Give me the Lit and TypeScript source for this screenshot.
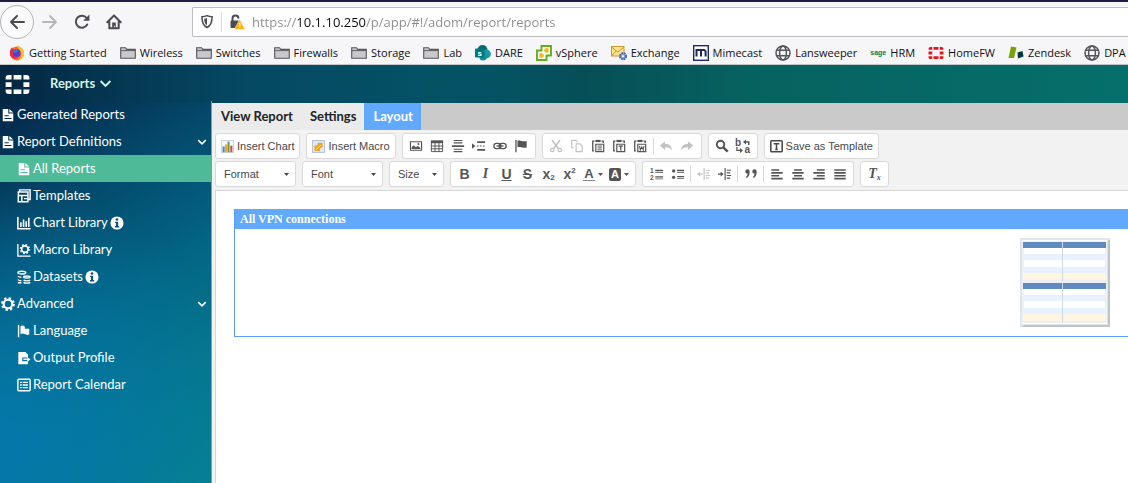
import { LitElement, html, svg, css } from "lit";
import { customElement } from "lit/decorators.js";
import { classMap } from "lit/directives/class-map.js";

const icon = (body: unknown, w = 16, h = 16, box = "0 0 16 16") =>
  html`<svg class="icon" width=${w} height=${h} viewBox=${box} fill="currentColor" aria-hidden="true">${body}</svg>`;

/* Browser chrome */
const back = icon(svg`<path d="M15 8H2M8 2L2 8l6 6" fill="none" stroke="currentColor" stroke-width="2" stroke-linecap="round" stroke-linejoin="round"/>`);
const forward = icon(svg`<path d="M1 8h13M8 2l6 6-6 6" fill="none" stroke="currentColor" stroke-width="2" stroke-linecap="round" stroke-linejoin="round"/>`);
const reload = icon(svg`<path d="M13.2 10.5A6 6 0 1 1 12.6 4" fill="none" stroke="currentColor" stroke-width="2" stroke-linecap="round"/><path d="M15.4 .6v6.2H9.2z"/>`);
const home = icon(svg`<path d="M1.3 8.2L8 1.5l6.7 6.7M3.3 7.5v6.8h9.4V7.5" fill="none" stroke="currentColor" stroke-width="2" stroke-linecap="round" stroke-linejoin="round"/><path d="M6.2 14V8.6h3.6V14H8.8v-2.2h-.9V14z"/>`);
const shield = icon(svg`<path d="M8 1.3c2 1 4 1.2 5.8 1.2 0 6-.8 10-5.8 12.300C3 12.500 2.200 8.500 2.200 2.500 4 2.500 6 2.300 8 1.300z" fill="none" stroke="currentColor" stroke-width="1.700"/><path d="M8 4c-1 .5-2 .7-3.200.8.1 3.700.8 6 3.200 7.600z"/>`, 14, 15);
const lock = icon(svg`<path d="M3.500 7V4.500a3 3 0 0 1 6 0" fill="none" stroke="currentColor" stroke-width="2"/><rect x="1.500" y="6.500" width="9.500" height="7.500" rx="1"/><path d="M10.800 5.200L16 15.500H5.200z" fill="#ffae14" stroke="#fff" stroke-width=".5"/><path d="M10.200 8.800h1.200v3.200h-1.200zM10.200 12.800h1.200v1.200h-1.200z" fill="#fff"/>`);
const folder = icon(svg`<path d="M.7 13V2.700h4.800l1.200 1.700h8.600V13.300H.7z" fill="#c9c9cc" stroke="#56565a" stroke-width="1.100"/><path d="M1 5.600h14" stroke="#56565a" stroke-width=".9"/>`);
const globe = icon(svg`<g fill="none" stroke="#55555a" stroke-width="1.500"><circle cx="8" cy="8" r="7"/><ellipse cx="8" cy="8" rx="3.400" ry="7"/><path d="M1.700 5.300h12.600M1.700 10.700h12.600"/></g>`);
const firefox = icon(svg`<circle cx="8" cy="8.400" r="7" fill="#ff6a1f"/><path d="M8.500.6C13 2 15.600 5.500 15 9.500c-.5 3.200-3 5.400-5.800 5.800 3-2.500 4-5.600 2.400-8.800C10.800 4.800 8.700 3.500 8.500.6z" fill="#ffc52b"/><circle cx="7.600" cy="8" r="3.900" fill="#5a3bd0"/><path d="M4 6.500C5.300 4 8 3.500 10 4.700L8.500 6.800 5.600 8z" fill="#2b7fe0"/><path d="M1 6.200C1.500 4 2.500 2.800 3.200 2.200c.2 1.200.8 1.900 1.800 2.300L3.700 8.400c.4 3 3 4.300 5.500 3.600-1.200 2.300-6 2.300-7.600-.8A9 9 0 0 1 1 6.200z" fill="#f0264c"/>`);
const sharepoint = icon(svg`<circle cx="7.500" cy="5" r="5" fill="#036c70"/><circle cx="11.500" cy="9" r="4.400" fill="#1a9ba1"/><circle cx="8" cy="12" r="3.600" fill="#0f8f96"/><rect y="3.500" width="9.500" height="9" rx="1" fill="#03787c"/><text x="4.700" y="11" text-anchor="middle" font-family="Liberation Sans, sans-serif" font-weight="700" font-size="8" fill="#fff">s</text>`);
const vsphere = icon(svg`<path d="M5.500 1H15v9.500h-4.500V15H1V5.500h4.500z" fill="#fff" stroke="#5cb01c" stroke-width="1.900"/><path d="M5.500 8.500v2h2M8.500 5.500h2v2" fill="none" stroke="#5cb01c" stroke-width="1.500"/><rect x="8.600" y="3.300" width="4" height="4" fill="#fbb216"/><rect x="3.300" y="8.600" width="4" height="4" fill="#fbb216"/>`);
const exchange = icon(svg`<rect x=".5" y="1.500" width="12.500" height="9.500" fill="#fbe38a" stroke="#c79a34"/><path d="M.5 2l6.300 5L13 2M.5 11l4.500-5" fill="none" stroke="#c79a34"/><circle cx="12" cy="11.200" r="2.800" fill="#86a5dd"/><circle cx="12" cy="11.200" r="3.100" fill="none" stroke="#3e61ae" stroke-width="1.800" stroke-dasharray="1.800 .7"/><circle cx="12" cy="11.200" r="1" fill="#fff"/>`);
const mimecast = icon(svg`<rect x=".7" y=".7" width="14.600" height="14.600" fill="#fff" stroke="#1d2b5a" stroke-width="1.400"/><path d="M3.500 11.500V5h7.800l1.300 1.300v5.200M8 5v6.500" fill="none" stroke="#1d2b5a" stroke-width="2"/>`);
const sage = html`<span class="sage" aria-hidden="true">sage</span>`;
const grid = (w: number, h: number) =>
  icon(svg`<path d="M2.500 0H5v3.700H0V2.500Q0 0 2.500 0zM6.700 0h6.600v3.700H6.700zM15 0h2.500Q20 0 20 2.500v1.200H15zM0 6h5v4H0zM15 6h5v4H15zM0 12.300h5V16H2.500Q0 16 0 13.500zM6.700 12.300h6.600V16H6.700zM15 12.300h5v1.200Q20 16 17.500 16H15z"/>`, w, h, "0 0 20 16");
const zendesk = icon(svg`<path d="M3 1.500l5.500 1L6 13H.5z" fill="#78a300"/><path d="M9.500 7.500l5-1.500 1 5.500-5.500 2z" fill="#03363d"/>`);

/* Sidebar */
const report = icon(svg`<path fill-rule="evenodd" d="M2 1h6.300v5.200H14V15H2zM4 8.200v1.200h5V8.200zm0 3.200v1.200h8v-1.200z"/><path d="M9.500 1L14 5H9.500z"/>`, 14, 14);
const template = icon(svg`<path d="M3 3V1h12v11h-2M1.500 3.500h11v11h-11zM1.500 7.500h11M5.500 7.500v7M8 11h4" fill="none" stroke="currentColor" stroke-width="1.700"/>`, 14, 14);
const chart = icon(svg`<path d="M1 1v13.500h14.500M4.500 12.500V7M7.500 12.500V4M10.500 12.500V6M13.500 12.500V2" fill="none" stroke="currentColor" stroke-width="1.800"/>`, 14, 14);
const gear = svg`<circle cx="8" cy="8" r="4.900" fill="none" stroke="currentColor" stroke-width="2.400"/><circle cx="8" cy="8" r="6.800" fill="none" stroke="currentColor" stroke-width="2.200" stroke-dasharray="2.670 2.670"/>`;
const macro = icon(svg`<path d="M1 1v14h14.500" fill="none" stroke="currentColor" stroke-width="1.500"/><g transform="translate(3 1) scale(.75)">${gear}</g>`, 14, 14);
const dataset = icon(svg`<g fill="none" stroke="currentColor" stroke-width="1.600"><ellipse cx="5.500" cy="3" rx="4.500" ry="1.500"/><path d="M1 7c1 1 2.500 1.300 4 1.300M1 11c1 1 2.500 1.300 4 1.300M1 14.600h4M7.500 8c0 1.500 7.500 1.500 7.500 0s-7.500-1.500-7.500 0zM7.500 11.300c1 1.500 6.500 1.500 7.500 0M7.500 14c1 1.400 6.500 1.400 7.500 0"/></g>`, 14, 14);
const flagSide = icon(svg`<path d="M1 1h1.600v14H1zM4 2.500c2-1.200 3.500-.8 5 .5v2.500h5V12c-2 .8-3.500.5-5-.5s-3-1-5-.2z"/>`, 14, 14);
const output = icon(svg`<path d="M1.500 1h8l3 3v3.300H6v4.400h6.500V15h-11z"/><path d="M7.300 8.700h4.500V6.800l3.700 2.800-3.700 2.700v-1.900H7.300z"/>`, 14, 14);
const calendar = icon(svg`<rect x="1" y="1.500" width="14" height="13" rx="1" fill="none" stroke="currentColor" stroke-width="1.600"/><path d="M3.500 5h2M6.500 5h6M3.500 8h2M6.500 8h6M3.500 11h2M6.500 11h6" stroke="currentColor" stroke-width="1.500"/>`, 14, 14);
const info = icon(svg`<circle cx="8" cy="8" r="7.500"/><g fill="#0a5277"><circle cx="8" cy="4" r="1.500"/><path d="M5.800 6.500h3.500v5h1.200V13H5.700v-1.500h1.200V8H5.800z"/></g>`, 14, 14);
const chevron = (w: number) =>
  icon(svg`<path d="M2 5l6 6 6-6" fill="none" stroke="currentColor" stroke-width="2.400"/>`, w, w);

/* Editor toolbar */
const tiChart = icon(svg`<path d="M.5.5h15v15H.5z" fill="#f4f7fb" stroke="#b9c6d8"/><path d="M2 8h2.500v7H2z" fill="#4d86c6"/><path d="M5 5.500h2.500V15H5z" fill="#f0a22e"/><path d="M8 2h2.500v13H8z" fill="#5e9c3e"/><path d="M11.500 7H14v8h-2.500z" fill="#d6493c"/>`, 13, 13);
const tiMacro = icon(svg`<path d="M.5.5h15v15H.5z" fill="#dfe9f6" stroke="#9fb3d0"/><path d="M3 12V7l4-1V3.500h6V9l-3 1v3.500H3z" fill="#eda51f"/><path d="M5 12l6-6" stroke="#fff3cf"/>`, 13, 13);
const image = icon(svg`<path fill-rule="evenodd" d="M1 2.500h14v11H1zM2.300 3.800v8.400h11.400V3.800z"/><path d="M3 11.500V9.500L5.500 7l2.200 2.300L10 8l3 2v1.500z"/><circle cx="10.800" cy="5.800" r="1.100"/>`, 14, 14);
const table = icon(svg`<path d="M1 1.500h14v3.300H1z"/><path d="M1.600 4v10.400h12.800V4M1 8h14M1 11.200h14M5.700 4v10.500M10.200 4v10.500" fill="none" stroke="currentColor" stroke-width="1.100"/>`, 14, 14);
const rule = icon(svg`<path d="M3 1h10v1.200H3zM3 3.800h10V5H3zM1 7.200h14v2H1zM3 11.200h10v1.200H3zM3 13.800h10V15H3z"/>`, 14, 14);
const pageBreak = icon(svg`<path d="M0 5l4 3-4 3zM6 2.500h9v2H6zM5.500 7.300h2v1.400h-2zM9 7.300h2v1.400H9zM12.500 7.300h2v1.400h-2zM6 11.500h9v2H6z"/>`, 14, 14);
const link = icon(svg`<g fill="none" stroke="currentColor" stroke-width="1.500"><rect x="1" y="5" width="8" height="6" rx="3"/><rect x="7" y="5" width="8" height="6" rx="3"/><path d="M4 8h8"/></g>`, 14, 14);
const flag = icon(svg`<path d="M1.500 1H3v14H1.500zM4 2c3-1 5 1.500 10.500.3v7.400C9 11 7 8.500 4 9.500z"/>`, 14, 14);
const cut = icon(svg`<path d="M3.500 1.500l7.500 10M12.500 1.500L5 11.500" fill="none" stroke="currentColor" stroke-width="1.800"/><circle cx="3.700" cy="12.500" r="1.900" fill="none" stroke="currentColor" stroke-width="1.400"/><circle cx="12.300" cy="12.500" r="1.900" fill="none" stroke="currentColor" stroke-width="1.400"/>`, 14, 14);
const copy = icon(svg`<path d="M4.500 10H2V1.500h5l2 2M7 5.500h4.500L14 8v6.500H7z" fill="none" stroke="currentColor" stroke-width="1.300"/>`, 14, 14);
const pasteBase = svg`<path d="M3.500 13.500H2v-11h2M12 2.500h2v2" fill="none" stroke="currentColor" stroke-width="1.500"/><path d="M5 1h6v2.500H5z"/><path d="M5.500 6h9v8.500h-9z" fill="none" stroke="currentColor" stroke-width="1.400"/>`;
const paste = icon(svg`${pasteBase}<path d="M7.500 8h5M7.500 10.200h5M7.500 12.400h5" stroke="currentColor" stroke-width="1.100"/>`, 14, 14);
const pasteText = icon(svg`${pasteBase}<path d="M7.500 8.200h5M10 8v5" stroke="currentColor" stroke-width="1.500"/>`, 14, 14);
const pasteWord = icon(svg`${pasteBase}<path d="M7.400 8l1 4.500L10 9l1.600 3.500 1-4.500" fill="none" stroke="currentColor" stroke-width="1.200"/>`, 14, 14);
const undoPath = svg`<path d="M1 7.500L7 2.500v3.300c4.500 0 7.500 2.200 8 7.200-1.800-2.700-4-3.600-8-3.500v3.300z"/>`;
const undo = icon(undoPath, 14, 14);
const redo = icon(svg`<g transform="matrix(-1 0 0 1 16 0)">${undoPath}</g>`, 14, 14);
const find = icon(svg`<circle cx="6.300" cy="6.300" r="4.300" fill="none" stroke="currentColor" stroke-width="2.200"/><path d="M9.500 9.500l5 5" stroke="currentColor" stroke-width="2.800"/>`, 14, 14);
const replace = icon(svg`<g font-family="Liberation Sans, sans-serif" font-weight="700" font-size="10"><text x="0" y="8">b</text><text x="9.500" y="15">a</text></g><path d="M8 4l3-2.500v1.700h3.500V7H13V4.800h-2v1.700zM8 12.500L5 10v1.700H2.500V9H1.300v4H5v2z"/>`, 16, 16);
const tiTemplate = icon(svg`<rect x="1" y="1" width="14" height="13.500" rx="1" fill="none" stroke="currentColor" stroke-width="1.900"/><path d="M4.500 4.500h7M8 4.500v7.500M6.500 11.800h3" fill="none" stroke="currentColor" stroke-width="1.900"/>`, 13, 13);
const numbered = icon(svg`<g font-family="Liberation Sans, sans-serif" font-weight="700" font-size="7.500"><text x="0" y="7">1</text><text x="0" y="15">2</text></g><path d="M6 3h9v1.500H6zM6 5.500h9v1H6zM6 10.500h9V12H6zM6 13h9v1H6z"/>`, 14, 14);
const bulleted = icon(svg`<circle cx="3" cy="4.500" r="1.900"/><circle cx="3" cy="11.800" r="1.900"/><path d="M7 3h8v1.500H7zM7 5.500h8v1H7zM7 10.300h8v1.500H7zM7 12.800h8v1H7z"/>`, 14, 14);
const outdent = icon(svg`<path d="M7.500 1h1.300v14H7.500zM10 3h5v1.300h-5zM10 6h4v1.300h-4zM10 9h5v1.300h-5zM10 12h4v1.300h-4zM0 8l3.500-2.700v2h3v1.500h-3v2z"/>`, 14, 14);
const indent = icon(svg`<path d="M7.500 1h1.300v14H7.500zM10 3h5v1.300h-5zM10 6h4v1.300h-4zM10 9h5v1.300h-5zM10 12h4v1.300h-4zM6.500 8L3 5.300v2H0v1.500h3v2z"/>`, 14, 14);
const quote = icon(svg`<path d="M1.500 5a2.500 2.500 0 1 1 5 0c0 3.500-1 6-3.500 7.500l-.8-1C3.500 10.500 4 9 4 7.500 2.500 7.500 1.500 6.500 1.500 5zM9.500 5a2.500 2.500 0 1 1 5 0c0 3.500-1 6-3.500 7.500l-.8-1C11.500 10.500 12 9 12 7.500 10.500 7.500 9.500 6.500 9.500 5z"/>`, 14, 14);
const align = (a: number, b: number) =>
  icon(svg`<path d="M${a} 2.500h9v1.800h-9zM${b} 5.800h13v1.800H${b}zM${a} 9.100h9v1.800h-9zM${b} 12.400h13v1.800H${b}z"/>`, 14, 14);
const justify = icon(svg`<path d="M1.500 2.500h13v1.800h-13zM1.500 5.800h13v1.800h-13zM1.500 9.100h13v1.800h-13zM1.500 12.400h13v1.800h-13z"/>`, 14, 14);
const caret = icon(svg`<path d="M0 0h5L2.500 3z"/>`, 5, 3, "0 0 5 3");

const bookmarks: [unknown, string][] = [
  [firefox, "Getting Started"], [folder, "Wireless"], [folder, "Switches"], [folder, "Firewalls"],
  [folder, "Storage"], [folder, "Lab"], [sharepoint, "DARE"], [vsphere, "vSphere"],
  [exchange, "Exchange"], [mimecast, "Mimecast"], [globe, "Lansweeper"], [sage, "HRM"],
  [html`<span class="red">${grid(16, 12)}</span>`, "HomeFW"], [zendesk, "Zendesk"], [globe, "DPA"],
];

interface NavItem { label: string; icon: unknown; sub?: boolean; active?: boolean; info?: boolean; open?: boolean }
const nav: NavItem[] = [
  { label: "Generated Reports", icon: report },
  { label: "Report Definitions", icon: report, open: true },
  { label: "All Reports", icon: report, sub: true, active: true },
  { label: "Templates", icon: template, sub: true },
  { label: "Chart Library", icon: chart, sub: true, info: true },
  { label: "Macro Library", icon: macro, sub: true },
  { label: "Datasets", icon: dataset, sub: true, info: true },
  { label: "Advanced", icon: icon(gear, 14, 14), open: true },
  { label: "Language", icon: flagSide, sub: true },
  { label: "Output Profile", icon: output, sub: true },
  { label: "Report Calendar", icon: calendar, sub: true },
];

@customElement("browser-bar")
class BrowserBar extends LitElement {
  static styles = css`
    :host { display: block; background: #f6f6f8; border-top: 2px solid #1d1c42; border-bottom: 1px solid #c4c6c9; font-family: "Open Sans", "Noto Sans", sans-serif; color: #101014; }
    .icon { display: block; flex: none; }
    .nav { display: flex; align-items: center; height: 39px; }
    button { display: flex; align-items: center; justify-content: center; width: 32px; height: 32px; padding: 0; border: 0; background: none; color: #4a4a4f; }
    .back { width: 34px; height: 34px; border: 1px solid #b4b4b6; border-radius: 50%; background: #fbfbfc; }
    .off { color: #b6b6b9; }
    .url { display: flex; flex: 1; align-items: center; gap: 7px; height: 28px; margin-left: 62px; padding-left: 7px; border: 1px solid #bdbdc0; border-right: 0; border-radius: 2px 0 0 2px; background: #fff; color: #4a4a4f; }
    .split { width: 1px; height: 20px; background: #dcdcde; }
    input { flex: 1; min-width: 0; height: 26px; padding: 0; border: 0; outline: 0; font: 13px "Open Sans", "Noto Sans", sans-serif; caret-color: #111; -webkit-text-fill-color: transparent; background: linear-gradient(90deg, #8b8b8f 45px, #0c0c0d 45px 114px, #8b8b8f 114px); -webkit-background-clip: text; background-clip: text; }
    .marks { display: flex; align-items: center; gap: 13px; height: 23px; padding-left: 9px; overflow: hidden; white-space: nowrap; }
    a { display: flex; flex: none; align-items: center; gap: 4px; font-size: 11px; line-height: 16px; color: inherit; text-decoration: none; }
    .red { color: #e8131b; }
    .sage { font: 700 7px/12px "Liberation Sans", sans-serif; color: #00804d; }
  `;
  render() {
    return html`
      <div class="nav">
        <button class="back" aria-label="Back">${back}</button>
        <button class="off" aria-label="Forward">${forward}</button>
        <button aria-label="Reload">${reload}</button>
        <button aria-label="Home">${home}</button>
        <div class="url">${shield}<span class="split"></span>${lock}
          <input aria-label="Address" .value=${"https://10.1.10.250/p/app/#!/adom/report/reports"} />
        </div>
      </div>
      <nav class="marks">${bookmarks.map(([i, t]) => html`<a href="#">${i}<span>${t}</span></a>`)}</nav>`;
  }
}

@customElement("side-nav")
class SideNav extends LitElement {
  static styles = css`
    :host { display: block; border-right: 1px solid #5cb09f; font: 13px/27px Lato, sans-serif; color: #fff; }
    .icon { display: block; flex: none; }
    a { display: flex; align-items: center; gap: 2px; height: 27px; padding: 0 4px 0 1px; color: inherit; text-decoration: none; white-space: nowrap; }
    .sub { padding-left: 17px; }
    .active { background: #4fba98; }
    .end { margin-left: auto; }
  `;
  render() {
    return html`<nav>${nav.map((n) => html`
      <a href="#" class=${classMap({ sub: !!n.sub, active: !!n.active })}>${n.icon}<span>${n.label}</span>
        ${n.info ? info : ""}${n.open ? html`<span class="end">${chevron(10)}</span>` : ""}</a>`)}</nav>`;
  }
}

@customElement("editor-toolbar")
class EditorToolbar extends LitElement {
  static styles = css`
    :host { display: flex; flex-direction: column; gap: 2px; padding: 3px; background: #f2f2f2; font: 11px "Liberation Sans", sans-serif; color: #484848; }
    .icon { display: block; flex: none; }
    .row { display: flex; gap: 6px; }
    .group { display: flex; flex: none; align-items: center; height: 24px; padding: 0 3px; border: 1px solid #d9d9d9; border-radius: 3px; background: #fff; }
    button { display: flex; flex: none; align-items: center; justify-content: center; width: 21px; height: 24px; padding: 0; border: 0; background: none; font: inherit; color: #555; }
    .off { color: #c2c2c2; }
    .labelled { gap: 3px; width: auto; padding: 0 2px; color: #484848; white-space: nowrap; }
    .sep { width: 1px; height: 16px; margin: 0 2px; background: #d6d6d6; }
    .pick { display: grid; align-items: center; padding: 0; }
    .pick select { grid-area: 1 / 1; height: 24px; padding: 0 8px; border: 0; outline: 0; background: none; appearance: none; font: inherit; color: inherit; }
    .pick .icon { grid-area: 1 / 1; justify-self: end; margin-right: 6px; pointer-events: none; }
    .wide { width: 79px; }
    .narrow { width: 53px; }
    .letter { font: 700 14px "Liberation Sans", sans-serif; }
    .italic { font: italic 700 14px "Liberation Serif", serif; }
    .under { text-decoration: underline; }
    .strike { text-decoration: line-through; }
    .script { font-size: 8px; }
    .low { align-self: flex-end; padding-bottom: 4px; }
    .high { align-self: flex-start; padding-top: 4px; }
    .colour { gap: 3px; width: 26px; }
    .ink { border-bottom: 1px solid #888; padding: 0 1px; font: 700 13px/13px "Liberation Sans", sans-serif; }
    .fill { padding: 0 2px; border-radius: 2px; background: #555; color: #fff; font: 700 11px/13px "Liberation Sans", sans-serif; }
  `;
  private b(label: string, body: unknown, cls = "") {
    return html`<button class=${cls} aria-label=${label} title=${label}>${body}</button>`;
  }
  private pick(label: string, size: string) {
    return html`<label class="group pick ${size}"><select aria-label=${label}><option>${label}</option></select>${caret}</label>`;
  }
  render() {
    const sep = html`<span class="sep"></span>`;
    return html`
      <div class="row">
        <div class="group"><button class="labelled">${tiChart}Insert Chart</button></div>
        <div class="group"><button class="labelled">${tiMacro}Insert Macro</button></div>
        <div class="group">${this.b("Image", image)}${this.b("Table", table)}${this.b("Horizontal Line", rule)}${this.b("Page Break", pageBreak)}${this.b("Link", link)}${this.b("Anchor", flag)}</div>
        <div class="group">${this.b("Cut", cut, "off")}${this.b("Copy", copy, "off")}${this.b("Paste", paste)}${this.b("Paste as text", pasteText)}${this.b("Paste from Word", pasteWord)}${sep}${this.b("Undo", undo, "off")}${this.b("Redo", redo, "off")}</div>
        <div class="group">${this.b("Find", find)}${this.b("Replace", replace)}</div>
        <div class="group"><button class="labelled">${tiTemplate}Save as Template</button></div>
      </div>
      <div class="row">
        ${this.pick("Format", "wide")}${this.pick("Font", "wide")}${this.pick("Size", "narrow")}
        <div class="group">
          ${this.b("Bold", "B", "letter")}${this.b("Italic", "I", "italic")}${this.b("Underline", "U", "letter under")}${this.b("Strikethrough", "S", "letter strike")}
          ${this.b("Subscript", html`x<span class="script low">2</span>`, "letter")}${this.b("Superscript", html`x<span class="script high">2</span>`, "letter")}
          ${this.b("Text Colour", html`<span class="ink">A</span>${caret}`, "colour")}${this.b("Background Colour", html`<span class="fill">A</span>${caret}`, "colour")}
        </div>
        <div class="group">${this.b("Numbered List", numbered)}${this.b("Bulleted List", bulleted)}${sep}${this.b("Outdent", outdent, "off")}${this.b("Indent", indent)}${sep}${this.b("Quote", quote)}${sep}${this.b("Left", align(1.5, 1.5))}${this.b("Centre", align(3.5, 1.5))}${this.b("Right", align(5.5, 1.5))}${this.b("Justify", justify)}</div>
        <div class="group">${this.b("Remove Format", html`T<span class="script low">x</span>`, "italic")}</div>
      </div>`;
  }
}

@customElement("report-canvas")
class ReportCanvas extends LitElement {
  static styles = css`
    :host { display: block; flex: 1; margin-left: 3px; padding: 18px 0 0 18px; border: solid #d6d6d6; border-width: 1px 0 0 1px; background: #fff; }
    .block { border: 1px solid #5d9bf5; border-width: 0 0 1px 1px; }
    h2 { margin: 0; padding-left: 5px; background: #60a9ff; color: #fff; font: 700 12px/20px "Liberation Serif", serif; }
    .body { display: flex; justify-content: flex-end; padding: 9px 18px 9px 0; }
    svg { display: block; }
  `;
  render() {
    const half = (y: number) => svg`
      <rect x="3" y=${y} width="83" height="39" fill="#fff" stroke="#dbe3ea"/>
      <rect x="3" y=${y} width="83" height="6" fill="#5f8bc0"/>
      <rect x="3" y=${y + 12} width="83" height="6" fill="#e8f1fe"/>
      <rect x="3" y=${y + 25} width="83" height="6" fill="#e8f1fe"/>
      <rect x="3" y=${y + 31} width="83" height="7" fill="#fef6e0"/>
      <rect x="42" y=${y} width="1" height="39" fill="#cfd9e4"/>`;
    return html`<section class="block"><h2>All VPN connections</h2>
      <div class="body"><svg width="90" height="89" viewBox="0 0 90 89" role="img" aria-label="Table chart">
        <rect width="90" height="89" fill="#dfe5ea"/><path d="M90 2v87H2l2-2h84V2z" fill="#bfc4c9"/>
        <rect x="2" y="2" width="85" height="84" fill="#fff"/>${half(4)}${half(45)}</svg></div></section>`;
  }
}

@customElement("app-root")
class AppRoot extends LitElement {
  static styles = css`
    :host { display: flex; flex-direction: column; min-height: 100vh; }
    .icon { display: block; flex: none; }
    .app { display: grid; flex: 1; grid-template: 36px 1fr / 212px 1fr; background: radial-gradient(circle at 0 380px, #0578ab 0, #0578ab00 260px), linear-gradient(150deg, #04284a 40px, #044a6c 150px, #036685 260px, #04768c 350px, #06828e 470px); }
    header { display: flex; grid-column: 1 / -1; align-items: center; gap: 20px; padding-left: 5px; margin-bottom: -2px; background: linear-gradient(90deg, #042743, #054963 22%, #045365 42%, #064f57 52%, #06625f 66%, #066f6b); color: #fff; }
    .menu { display: flex; align-items: center; gap: 4px; padding: 0 0 2px; border: 0; background: none; color: #d0f5e5; font: 700 13px Lato, sans-serif; }
    main { display: flex; flex-direction: column; min-width: 0; margin-top: 2px; background: #f2f2f2; }
    .tabs { display: flex; height: 27px; background: #cacaca; }
    .tab { padding: 0 8px 2px 9px; border: 0; background: #ebebeb; color: #222; font: 700 13px Lato, sans-serif; }
    .on { background: #60a9ff; color: #fff; }
  `;
  render() {
    return html`
      <browser-bar></browser-bar>
      <div class="app">
        <header>${grid(25, 19)}<button class="menu">Reports ${chevron(13)}</button></header>
        <side-nav></side-nav>
        <main>
          <div class="tabs" role="tablist">
            <button class="tab" role="tab">View Report</button><button class="tab" role="tab">Settings</button><button class="tab on" role="tab" aria-selected="true">Layout</button>
          </div>
          <editor-toolbar></editor-toolbar>
          <report-canvas></report-canvas>
        </main>
      </div>`;
  }
}
